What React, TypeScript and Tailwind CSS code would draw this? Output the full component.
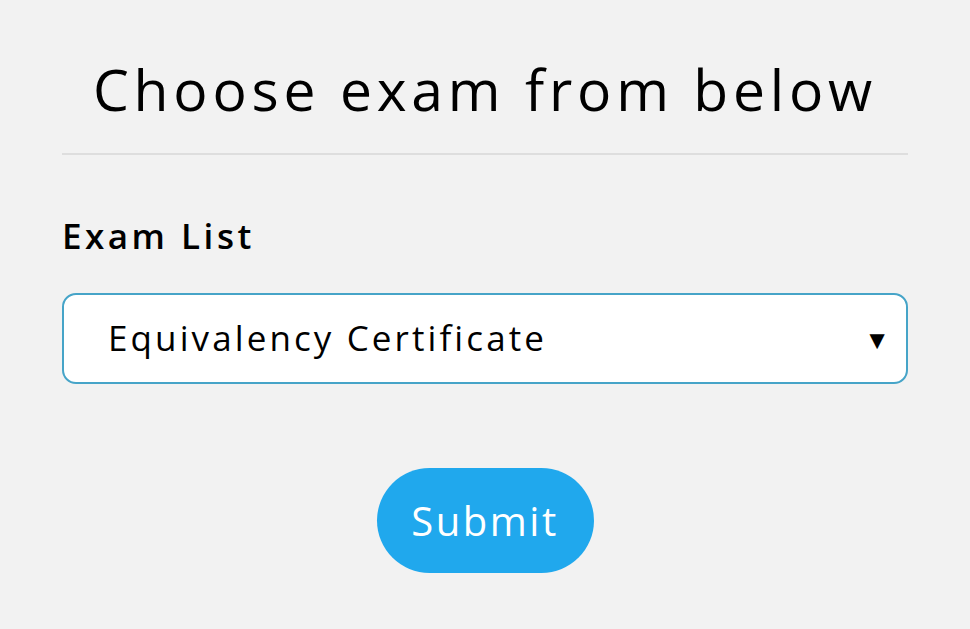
import React from 'react';

export default function App() {
  return (
    <div
      className="min-h-[629px] w-full bg-[#f2f2f2] text-black"
      style={{ fontFamily: '"Open Sans", "Liberation Sans", sans-serif' }}
    >
      <div className="mx-[62px] pt-[50px]">
        {/* Title */}
        <h1 className="text-center text-[57px] leading-[78px] tracking-[4.8px] font-normal">
          Choose exam from below
        </h1>
        <div className="mt-[25px] h-[2px] bg-[#dedede]" />

        {/* Exam list */}
        <label className="mt-[57px] block text-[35px] leading-[48px] font-semibold tracking-[3.5px]">
          Exam List
        </label>
        <div className="mt-[33px] flex h-[91px] items-center justify-between rounded-[14px] border-2 border-[#46a4c8] bg-white pl-[44px] pr-[16px]">
          <span className="text-[35px] tracking-[3.1px]">Equivalency Certificate</span>
          <span className="text-[26px] leading-none">▼</span>
        </div>

        {/* Submit */}
        <div className="mt-[84px] flex justify-center">
          <button className="h-[105px] w-[217px] rounded-full bg-[#20a8ed] text-[40px] tracking-[2.5px] text-white">
            Submit
          </button>
        </div>
      </div>
    </div>
  );
}
